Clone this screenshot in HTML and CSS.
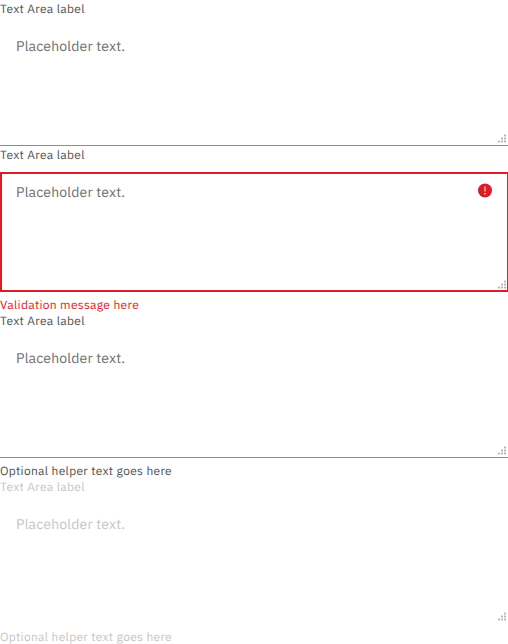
FILE: index.html
```
<!DOCTYPE html>
<html lang="en">
<head>
<meta charset="utf-8">
<title>Text areas</title>
<link rel="stylesheet" href="styles.css">
</head>
<body>
<svg class="defs" width="0" height="0"><defs><symbol id="grip" viewBox="0 0 8 9"><path fill="#dedede" d="M0 6h2v3H0zM3 3h2v6H3zM6 0h2v9H6z"/><path fill="#b8b8b8" d="M0 7h2v1H0zM3 7h2v1H3zM6 7h2v1H6zM3 4h2v1H3zM6 4h2v1H6zM6 1h2v1H6z"/></symbol></defs></svg>
<div class="item">
  <label class="label"><span>Text Area label</span></label>
  <div class="field"><span class="placeholder">Placeholder text.</span><svg class="grip"><use href="#grip"/></svg></div>
</div>
<div class="item">
  <label class="label"><span>Text Area label</span></label>
  <div class="field invalid"><span class="placeholder">Placeholder text.</span>
    <svg class="icon" viewBox="0 0 14 15"><circle cx="7" cy="7.5" r="7" fill="#da1e28"/><path fill="#fff" fill-opacity=".85" d="M6.45 3.5h1.1v5h-1.1z"/><circle cx="7" cy="10.7" r=".8" fill="#fff"/></svg>
    <svg class="grip"><use href="#grip"/></svg></div>
  <div class="message error">Validation message here</div>
</div>
<div class="item">
  <label class="label"><span>Text Area label</span></label>
  <div class="field"><span class="placeholder">Placeholder text.</span><svg class="grip"><use href="#grip"/></svg></div>
  <div class="message helper">Optional helper text goes here</div>
</div>
<div class="item disabled">
  <label class="label"><span>Text Area label</span></label>
  <div class="field"><span class="placeholder">Placeholder text.</span><svg class="grip"><use href="#grip"/></svg></div>
  <div class="message helper">Optional helper text goes here</div>
</div>
</body>
</html>
```
FILE: styles.css
```
* { box-sizing: border-box; }
body { margin: 0; background: #fff; color: #525252; font-family: "IBM Plex Sans", "Noto Sans", sans-serif; font-size: 12px; letter-spacing: 0.32px; text-rendering: geometricPrecision; overflow: hidden; }
.defs { display: block; }
.label { display: block; height: 18px; line-height: 20px; margin-bottom: 8px; }
.field { position: relative; width: 509px; height: 120px; padding: 10px 16px; border-bottom: 1px solid #8d8d8d; font-size: 14px; line-height: 21px; color: #6f6f6f; }
.placeholder { letter-spacing: 0.16px; }
.grip { position: absolute; right: 3px; bottom: 2px; width: 8px; height: 9px; }
.icon { position: absolute; right: 17px; top: 11px; width: 14px; height: 15px; }
.invalid { border: 0; box-shadow: inset 0 0 0 2px #da1e28; }
.invalid .grip { bottom: 3px; }
.message { height: 16px; margin-top: 4px; line-height: 19px; }
.error { color: #da1e28; }
.helper { color: #525252; }
.disabled, .disabled .placeholder, .disabled .helper { color: #c6c6c6; }
.disabled .field { border-bottom-color: transparent; }
```
